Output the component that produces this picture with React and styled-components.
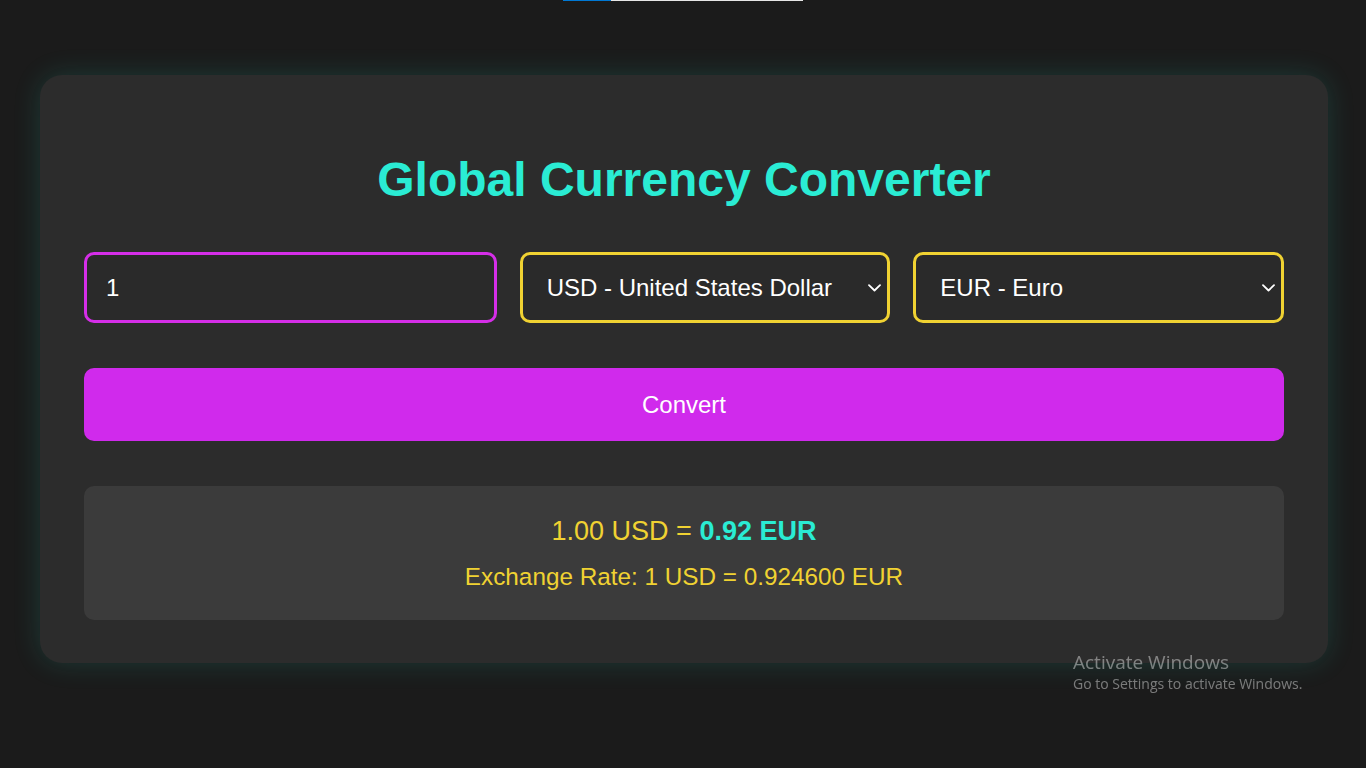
import React, { useState } from "react";
import styled, { createGlobalStyle } from "styled-components";

const GlobalStyle = createGlobalStyle`
  * { box-sizing: border-box; }
  html, body {
    margin: 0;
    padding: 0;
    background: #1b1b1b;
    font-family: "Liberation Sans", Arial, sans-serif;
    min-height: 100%;
  }
`;

const Page = styled.main`
  min-height: 100vh;
  padding: 75px 38px 40px 40px;
`;

const LoadBar = styled.div`
  position: fixed;
  top: 0;
  left: 563px;
  width: 240px;
  height: 1px;
  display: flex;
`;

const LoadSegment = styled.span`
  display: block;
  height: 100%;
  width: ${({ $w }) => $w}px;
  background: ${({ $c }) => $c};
`;

const Card = styled.section`
  background: #2c2c2c;
  border-radius: 22px;
  padding: 44px 44px 43px;
  box-shadow: 0 0 28px rgba(40, 220, 190, 0.16);
`;

const Title = styled.h1`
  margin: 33px 0 45px;
  text-align: center;
  color: #2aecd4;
  font-size: 48px;
  font-weight: 700;
`;

const Row = styled.div`
  display: grid;
  grid-template-columns: 413fr 371fr 371fr;
  gap: 23px;
`;

const AmountInput = styled.input`
  height: 71px;
  width: 100%;
  background: #2a2a2a;
  border: 3px solid #d52ee8;
  border-radius: 10px;
  padding: 0 19px;
  color: #fff;
  font-family: inherit;
  font-size: 24px;
  outline: none;
`;

const SelectWrap = styled.div`
  position: relative;
`;

const Select = styled.select`
  appearance: none;
  -webkit-appearance: none;
  height: 71px;
  width: 100%;
  background: #2a2a2a;
  border: 3px solid #f0d232;
  border-radius: 10px;
  padding: 0 40px 0 24px;
  color: #fff;
  font-family: inherit;
  font-size: 24px;
  outline: none;
`;

const Chevron = styled.svg`
  position: absolute;
  right: 9px;
  top: 50%;
  margin-top: -4px;
  width: 13px;
  height: 8px;
  pointer-events: none;
`;

const ConvertButton = styled.button`
  display: block;
  width: 100%;
  height: 73px;
  margin-top: 45px;
  border: none;
  border-radius: 10px;
  background: #d02aec;
  color: #fff;
  font-family: inherit;
  font-size: 24px;
  cursor: pointer;
`;

const Result = styled.div`
  margin-top: 45px;
  background: #3b3b3b;
  border-radius: 10px;
  padding: 30px 20px 29px;
  text-align: center;
  color: #f0d232;
`;

const ResultMain = styled.p`
  margin: 0;
  font-size: 27px;
  line-height: 31px;
`;

const Highlight = styled.strong`
  color: #2aecd4;
  font-weight: 700;
`;

const RateLine = styled.p`
  margin: 16px 0 0;
  font-size: 24.3px;
  line-height: 28px;
`;

const Watermark = styled.div`
  position: fixed;
  left: 1073px;
  top: 650px;
  color: rgba(255, 255, 255, 0.42);
  font-family: "Open Sans", "Noto Sans", sans-serif;
  pointer-events: none;
`;

const WatermarkTitle = styled.div`
  font-size: 19px;
  line-height: 24px;
`;

const WatermarkText = styled.div`
  font-size: 14px;
  line-height: 20px;
`;

const ChevronIcon = () => (
  <Chevron viewBox="0 0 13 8" fill="none">
    <path d="M1 1.2 L6.5 6.5 L12 1.2" stroke="#fff" strokeWidth="1.8" strokeLinecap="round" strokeLinejoin="round" />
  </Chevron>
);

const currencies = [
  ["USD", "United States Dollar"],
  ["EUR", "Euro"],
  ["GBP", "British Pound"],
  ["JPY", "Japanese Yen"],
  ["INR", "Indian Rupee"],
];

export default function App() {
  const [amount, setAmount] = useState("1");
  const [from, setFrom] = useState("USD");
  const [to, setTo] = useState("EUR");

  return (
    <>
      <GlobalStyle />
      <LoadBar>
        <LoadSegment $w={48} $c="#0078d4" />
        <LoadSegment $w={192} $c="#e6e6e6" />
      </LoadBar>
      <Page>
        <Card>
          <Title>Global Currency Converter</Title>
          <Row>
            <AmountInput value={amount} onChange={(e) => setAmount(e.target.value)} />
            <SelectWrap>
              <Select value={from} onChange={(e) => setFrom(e.target.value)}>
                {currencies.map(([code, name]) => (
                  <option key={code} value={code}>{`${code} - ${name}`}</option>
                ))}
              </Select>
              <ChevronIcon />
            </SelectWrap>
            <SelectWrap>
              <Select value={to} onChange={(e) => setTo(e.target.value)}>
                {currencies.map(([code, name]) => (
                  <option key={code} value={code}>{`${code} - ${name}`}</option>
                ))}
              </Select>
              <ChevronIcon />
            </SelectWrap>
          </Row>
          <ConvertButton>Convert</ConvertButton>
          <Result>
            <ResultMain>
              1.00 USD = <Highlight>0.92 EUR</Highlight>
            </ResultMain>
            <RateLine>Exchange Rate: 1 USD = 0.924600 EUR</RateLine>
          </Result>
        </Card>
      </Page>
      <Watermark>
        <WatermarkTitle>Activate Windows</WatermarkTitle>
        <WatermarkText>Go to Settings to activate Windows.</WatermarkText>
      </Watermark>
    </>
  );
}
